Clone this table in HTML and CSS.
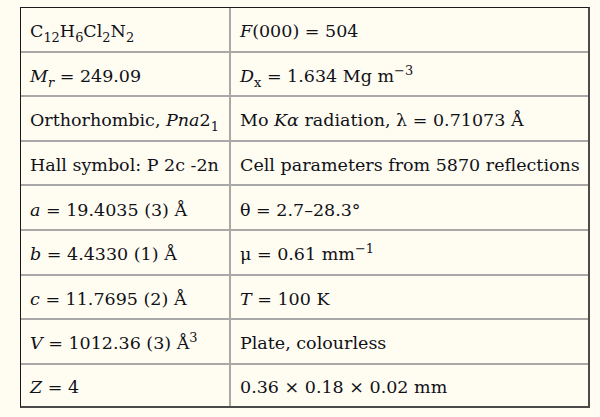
FILE: index.html
```html
<!DOCTYPE html>
<html lang="en">
<head>
    <meta charset="UTF-8">
    <meta name="viewport" content="width=device-width, initial-scale=1.0">
    <title>Crystal data</title>
    <link rel="stylesheet" href="styles.css">
</head>
<body>
    <table class="crystal">
        <tr>
            <td>C<sub>12</sub>H<sub>6</sub>Cl<sub>2</sub>N<sub>2</sub></td>
            <td><i>F</i>(000) = 504</td>
        </tr>
        <tr>
            <td><i>M</i><sub><i>r</i></sub> = 249.09</td>
            <td><i>D</i><sub>x</sub> = 1.634 Mg m<sup>&minus;3</sup></td>
        </tr>
        <tr>
            <td>Orthorhombic, <i>Pna</i>2<sub>1</sub></td>
            <td>Mo <i>K&alpha;</i> radiation, &lambda; = 0.71073 &Aring;</td>
        </tr>
        <tr>
            <td>Hall symbol: P 2c -2n</td>
            <td>Cell parameters from 5870 reflections</td>
        </tr>
        <tr>
            <td><i>a</i> = 19.4035 (3) &Aring;</td>
            <td>&theta; = 2.7&ndash;28.3&deg;</td>
        </tr>
        <tr>
            <td><i>b</i> = 4.4330 (1) &Aring;</td>
            <td>&mu; = 0.61 mm<sup>&minus;1</sup></td>
        </tr>
        <tr>
            <td><i>c</i> = 11.7695 (2) &Aring;</td>
            <td><i>T</i> = 100 K</td>
        </tr>
        <tr>
            <td><i>V</i> = 1012.36 (3) &Aring;<sup>3</sup></td>
            <td>Plate, colourless</td>
        </tr>
        <tr>
            <td><i>Z</i> = 4</td>
            <td>0.36 &times; 0.18 &times; 0.02 mm</td>
        </tr>
    </table>
</body>
</html>
```

FILE: styles.css
```css
body {
    margin: 0;
    padding: 7px 0 0 20px;
    background-color: #fffdf2;
    font-family: "DejaVu Serif", "Liberation Serif", serif;
    color: #111118;
}

.crystal {
    border-collapse: separate;
    border-spacing: 0;
    width: 570px;
    height: 401px;
    border-top: 1px solid #1a1a1a;
    border-left: 1px solid #1a1a1a;
    border-right: 2px solid #4a4a4a;
    border-bottom: 2px solid #4a4a4a;
}

.crystal td {
    padding: 4px 0 0 9px;
    font-size: 17.5px;
    white-space: nowrap;
    border-bottom: 2px solid #a8a8a8;
}

.crystal tr:last-child td {
    border-bottom: none;
}

.crystal td:first-child {
    width: 199px;
    border-right: 2px solid #a8a8a8;
}

.crystal sub,
.crystal sup {
    font-size: 0.74em;
    line-height: 0;
}
```
